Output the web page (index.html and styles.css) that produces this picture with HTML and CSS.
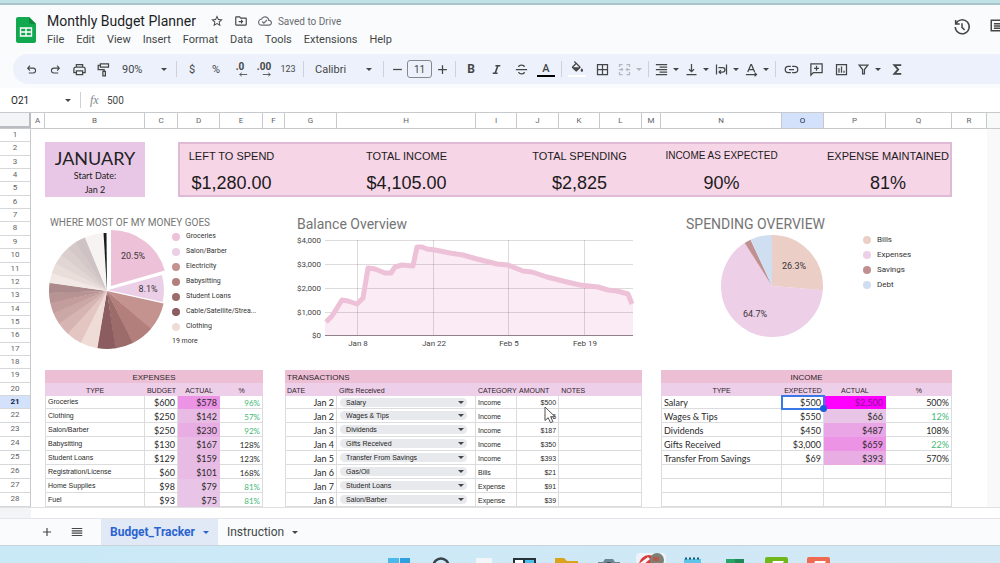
FILE: index.html
```html
<!DOCTYPE html>
<html lang="en">
<head>
    <meta charset="UTF-8">
    <meta name="viewport" content="width=device-width, initial-scale=1.0">
    <title>Monthly Budget Planner</title>
    <link rel="stylesheet" href="styles.css">
</head>
<body>
    <div class="window-edge"></div>

    <!-- Title and menus -->
    <header class="header">
        <svg class="logo" viewBox="0 0 20 26">
            <path fill="#12a84f" d="M2 0h11l7 7v17a2 2 0 0 1-2 2H2a2 2 0 0 1-2-2V2a2 2 0 0 1 2-2z"/>
            <path fill="#0b8a3e" d="M13 0l7 7h-5a2 2 0 0 1-2-2z"/>
            <path fill="none" stroke="#fff" stroke-width="1.4" d="M4.500 11h11v8h-11zM4.500 15h11M10 11v8"/>
        </svg>
        <div class="header-main">
            <div class="title-row">
                <h1>Monthly Budget Planner</h1>
                <button class="icon-btn" aria-label="Star"><svg viewBox="0 0 24 24"><path d="M22 9.24l-7.19-.62L12 2 9.19 8.63 2 9.24l5.46 4.73L5.82 21 12 17.27 18.18 21l-1.63-7.03L22 9.24zM12 15.4l-3.76 2.27 1-4.28-3.32-2.88 4.38-.38L12 6.1l1.71 4.04 4.38.38-3.32 2.88 1 4.28L12 15.4z"/></svg></button>
                <button class="icon-btn" aria-label="Move"><svg viewBox="0 0 24 24"><path d="M20 6h-8l-2-2H4c-1.1 0-2 .9-2 2v12c0 1.1.9 2 2 2h16c1.1 0 2-.9 2-2V8c0-1.1-.9-2-2-2zm0 12H4V6h5.17l2 2H20v10zm-8-1l4-4-4-4v3H8v2h4z"/></svg></button>
                <button class="icon-btn saved"><svg viewBox="0 0 24 24"><path d="M19.35 10.04C18.67 6.59 15.64 4 12 4 9.11 4 6.6 5.64 5.35 8.04 2.34 8.36 0 10.91 0 14c0 3.31 2.69 6 6 6h13c2.76 0 5-2.24 5-5 0-2.64-2.05-4.78-4.65-4.96zM19 18H6c-2.21 0-4-1.79-4-4 0-2.05 1.53-3.76 3.56-3.97l1.07-.11.5-.95C8.08 7.14 9.94 6 12 6c2.62 0 4.88 1.86 5.39 4.43l.3 1.5 1.53.11c1.56.1 2.78 1.41 2.78 2.96 0 1.65-1.35 3-3 3zm-9-3.82l-2.09-2.09L6.5 13.5 10 17l6.01-6.01-1.41-1.41z"/></svg>Saved to Drive</button>
            </div>
            <nav class="menus">
                <button>File</button>
                <button>Edit</button>
                <button>View</button>
                <button>Insert</button>
                <button>Format</button>
                <button>Data</button>
                <button>Tools</button>
                <button>Extensions</button>
                <button>Help</button>
            </nav>
        </div>
        <div class="header-actions">
            <button class="icon-btn big" aria-label="Version history"><svg class="line" viewBox="0 0 24 24"><path d="M4 7.500A9.300 9.300 0 1 1 3 12M3.500 2.500v5.500h5.500M12 7v5.500l3.500 3.500"/></svg></button>
            <button class="icon-btn big" aria-label="Comments"><svg class="line" viewBox="0 0 24 24"><path d="M3 3h18v17l-3-3H3zM6.500 7.500h11M6.500 10.500h11M6.500 13.500h11"/></svg></button>
        </div>
    </header>

    <!-- Toolbar -->
    <div class="toolbar-wrap">
        <div class="toolbar">
            <div class="group tight">
                <button class="tool undo" aria-label="Undo"><svg class="line" viewBox="0 0 24 24"><path d="M9 5L5 9.500l4 4.500M5.500 9.500H15a4.500 4.500 0 0 1 0 9H7"/></svg></button>
                <button class="tool undo" aria-label="Redo"><svg class="line" viewBox="0 0 24 24"><path d="M15 5l4 4.500-4 4.500M18.500 9.500H9a4.500 4.500 0 0 0 0 9h8"/></svg></button>
                <button class="tool" aria-label="Print"><svg class="line" viewBox="0 0 24 24"><path d="M7 8V4h10v4M7 17H3V11a3 3 0 0 1 3-3h12a3 3 0 0 1 3 3v6h-4M7 14h10v6H7z"/></svg></button>
                <button class="tool" aria-label="Paint format"><svg class="line" viewBox="0 0 24 24"><path d="M7 3h13v5H7zM7 5.500H3.500V12H13v3M11 15h4v7h-4z"/></svg></button>
            </div>
            <select class="zoom-pick" aria-label="Zoom"><option>90%</option><option>100%</option></select>
            <span class="sep"></span>
            <div class="group tight">
                <button class="tool">$</button>
                <button class="tool">%</button>
                <button class="tool dec" aria-label="Decrease decimal places">.0<svg class="line" viewBox="0 0 12 6"><path d="M11 3H2M4.500 1L2 3l2.500 2"/></svg></button>
                <button class="tool dec" aria-label="Increase decimal places">.00<svg class="line" viewBox="0 0 12 6"><path d="M1 3h9M7.500 1L10 3 7.500 5"/></svg></button>
                <button class="tool num">123</button>
            </div>
            <span class="sep"></span>
            <select class="font-pick" aria-label="Font"><option>Calibri</option><option>Arial</option></select>
            <span class="sep"></span>
            <div class="group tight">
                <button class="tool step" aria-label="Decrease font size"><svg class="line" viewBox="0 0 24 24"><path d="M5 12h14"/></svg></button>
                <input class="size-box" value="11" aria-label="Font size">
                <button class="tool step" aria-label="Increase font size"><svg class="line" viewBox="0 0 24 24"><path d="M5 12h14M12 5v14"/></svg></button>
            </div>
            <span class="sep"></span>
            <div class="group">
                <button class="tool bold">B</button>
                <button class="tool italic" aria-label="Italic"><svg class="line" viewBox="0 0 24 24"><path d="M10 5h9M5 19h9M14.500 5l-5 14"/></svg></button>
                <button class="tool" aria-label="Strikethrough"><svg class="line" viewBox="0 0 24 24"><path d="M3 12h18M16.500 8c-.5-4-9-4-9 0M7.500 16c.5 4 9 4 9 0"/></svg></button>
                <button class="tool text-color">A</button>
            </div>
            <span class="sep"></span>
            <div class="group">
                <button class="tool fill-color" aria-label="Fill color"><svg viewBox="0 0 24 24"><path d="M16.560 8.940L7.620 0 6.210 1.410l2.380 2.380-5.150 5.150a1.490 1.490 0 0 0 0 2.120l5.500 5.500c.29.29.68.44 1.060.44s.77-.15 1.060-.44l5.500-5.500c.59-.58.59-1.530 0-2.120zM5.210 10L10 5.210 14.790 10zM19 11.500s-2 2.170-2 3.500a2 2 0 0 0 4 0c0-1.330-2-3.500-2-3.500z"/></svg></button>
                <button class="tool" aria-label="Borders"><svg class="line" viewBox="0 0 24 24"><path d="M4 4h16v16H4zM12 4v16M4 12h16"/></svg></button>
                <button class="tool menu faded" aria-label="Merge cells"><svg class="line" viewBox="0 0 24 24"><path d="M9 4H4v4M15 4h5v4M9 20H4v-4M15 20h5v-4M3 12h6M7 10l2 2-2 2M21 12h-6M17 10l-2 2 2 2"/></svg><i class="caret"></i></button>
            </div>
            <span class="sep"></span>
            <div class="group tight">
                <button class="tool menu" aria-label="Horizontal align"><svg class="line" viewBox="0 0 24 24"><path d="M3 4h18M9 8h12M3 12h18M9 16h12M3 20h18"/></svg><i class="caret"></i></button>
                <button class="tool menu" aria-label="Vertical align"><svg class="line" viewBox="0 0 24 24"><path d="M4 20h16M12 3v12M8 11.500l4 4 4-4"/></svg><i class="caret"></i></button>
                <button class="tool menu" aria-label="Text wrapping"><svg class="line" viewBox="0 0 24 24"><path d="M4 4v16M20 4v16M7 9h7a3 3 0 0 1 0 7H9M11 13l-3 3 3 3"/></svg><i class="caret"></i></button>
                <button class="tool menu" aria-label="Text rotation"><svg class="line" viewBox="0 0 24 24"><path d="M6 16l5-12h1l5 12M8 12h7M3 20h17M17 17l3 3-3 3"/></svg><i class="caret"></i></button>
            </div>
            <span class="sep"></span>
            <div class="group">
                <button class="tool" aria-label="Insert link"><svg class="line" viewBox="0 0 24 24"><path d="M11 7H7a5 5 0 0 0 0 10h4M13 7h4a5 5 0 0 1 0 10h-4M8 12h8"/></svg></button>
                <button class="tool" aria-label="Insert comment"><svg class="line" viewBox="0 0 24 24"><path d="M3 21V3h18v14H7zM12 6v8M8 10h8"/></svg></button>
                <button class="tool" aria-label="Insert chart"><svg class="line" viewBox="0 0 24 24"><path d="M4 4h16v16H4zM8 10v7M12 7v10M16 14v3"/></svg></button>
                <button class="tool menu" aria-label="Filter"><svg class="line" viewBox="0 0 24 24"><path d="M5 5h14l-5.500 7v7h-3v-7z"/></svg><i class="caret"></i></button>
                <button class="tool" aria-label="Functions"><svg class="line heavy" viewBox="0 0 24 24"><path d="M18 5H7l6 7-6 7h11"/></svg></button>
            </div>
        </div>
    </div>

    <!-- Formula bar -->
    <div class="formula-bar">
        <input class="name-box" value="O21" aria-label="Name box">
        <i class="caret"></i>
        <span class="sep"></span>
        <label class="fx" for="formula">fx</label>
        <input id="formula" class="formula" value="500">
    </div>

    <!-- Sheet -->
    <div class="col-heads">
        <span class="corner"></span>
        <span>A</span><span>B</span><span>C</span><span>D</span><span>E</span><span>F</span><span>G</span><span>H</span><span>I</span><span>J</span><span>K</span><span>L</span><span>M</span><span>N</span><span class="active">O</span><span>P</span><span>Q</span><span>R</span><span class="outside"></span>
    </div>
    <main class="sheet">
        <div class="row-heads">
            <span>1</span><span>2</span><span>3</span><span>4</span><span>5</span><span>6</span><span>7</span><span>8</span><span>9</span><span>10</span><span>11</span><span>12</span><span>13</span><span>14</span><span>15</span><span>16</span><span>17</span><span>18</span><span>19</span><span>20</span><span class="active">21</span><span>22</span><span>23</span><span>24</span><span>25</span><span>26</span><span>27</span><span>28</span>
        </div>
        <div class="canvas">
            <div class="outside-area"></div>

            <section class="month">
                <h2>JANUARY</h2>
                <p>Start Date:</p>
                <p>Jan 2</p>
            </section>
            <section class="summary">
                <div class="stat left"><span class="label">LEFT TO SPEND</span><strong>$1,280.00</strong></div>
                <div class="stat income"><span class="label">TOTAL INCOME</span><strong>$4,105.00</strong></div>
                <div class="stat spending"><span class="label">TOTAL SPENDING</span><strong>$2,825</strong></div>
                <div class="stat expected"><span class="label small">INCOME AS EXPECTED</span><strong>90%</strong></div>
                <div class="stat maintained"><span class="label">EXPENSE MAINTAINED</span><strong>81%</strong></div>
            </section>

            <section class="chart money">
                <h3>WHERE MOST OF MY MONEY GOES</h3>
                <div class="chart-body">
                    <svg class="pie" viewBox="0 1 122 122">
                        <g class="slices" transform="translate(59 63) rotate(-90)">
                            <circle r="29" pathLength="360" stroke="#c4928f" stroke-dasharray="28.500 331.500" stroke-dashoffset="-102.500"/>
                            <circle r="29" pathLength="360" stroke="#b37f7c" stroke-dasharray="23.500 336.500" stroke-dashoffset="-130.500"/>
                            <circle r="29" pathLength="360" stroke="#9c6c6b" stroke-dasharray="18.500 341.500" stroke-dashoffset="-153.500"/>
                            <circle r="29" pathLength="360" stroke="#8b5d60" stroke-dasharray="18.500 341.500" stroke-dashoffset="-171.500"/>
                            <circle r="29" pathLength="360" stroke="#efdcd7" stroke-dasharray="18 342" stroke-dashoffset="-189.500"/>
                            <circle r="29" pathLength="360" stroke="#e3c5c2" stroke-dasharray="16 344" stroke-dashoffset="-207"/>
                            <circle r="29" pathLength="360" stroke="#d6b4b1" stroke-dasharray="14 346" stroke-dashoffset="-222.500"/>
                            <circle r="29" pathLength="360" stroke="#cba7a5" stroke-dasharray="12 348" stroke-dashoffset="-236"/>
                            <circle r="29" pathLength="360" stroke="#c29d9c" stroke-dasharray="11 349" stroke-dashoffset="-247.500"/>
                            <circle r="29" pathLength="360" stroke="#b89394" stroke-dasharray="10.500 349.500" stroke-dashoffset="-258"/>
                            <circle r="29" pathLength="360" stroke="#ac8a8c" stroke-dasharray="10.500 349.500" stroke-dashoffset="-268"/>
                            <circle r="29" pathLength="360" stroke="#f2e8e6" stroke-dasharray="10.500 349.500" stroke-dashoffset="-278"/>
                            <circle r="29" pathLength="360" stroke="#eadedb" stroke-dasharray="10.500 349.500" stroke-dashoffset="-288"/>
                            <circle r="29" pathLength="360" stroke="#e2d6d4" stroke-dasharray="10.500 349.500" stroke-dashoffset="-298"/>
                            <circle r="29" pathLength="360" stroke="#dbcfce" stroke-dasharray="10.500 349.500" stroke-dashoffset="-308"/>
                            <circle r="29" pathLength="360" stroke="#d5c8c9" stroke-dasharray="10.500 349.500" stroke-dashoffset="-318"/>
                            <circle r="29" pathLength="360" stroke="#cfc2c4" stroke-dasharray="10.500 349.500" stroke-dashoffset="-327.500"/>
                            <circle r="29" pathLength="360" stroke="#f6f3f2" stroke-dasharray="19 341" stroke-dashoffset="-337.500"/>
                            <circle r="29" pathLength="360" stroke="#1f1a1c" stroke-dasharray="3 357" stroke-dashoffset="-356.500"/>
                        </g>
                        <g class="slices popped" transform="translate(63 58) rotate(-90)">
                            <circle r="28" pathLength="360" stroke="#edc1d7" stroke-dasharray="73.800 286.200" stroke-dashoffset="0"/>
                        </g>
                        <g class="slices popped" transform="translate(60 62) rotate(-90)">
                            <circle r="28" pathLength="360" stroke="#ebcfe7" stroke-dasharray="28 332" stroke-dashoffset="-74.500"/>
                        </g>
                        <text x="85" y="31">20.5%</text>
                        <text x="100" y="64">8.1%</text>
                    </svg>
                    <ul class="legend">
                        <li><i class="dot groceries"></i>Groceries</li>
                        <li><i class="dot salon"></i>Salon/Barber</li>
                        <li><i class="dot electricity"></i>Electricity</li>
                        <li><i class="dot babysitting"></i>Babysitting</li>
                        <li><i class="dot loans"></i>Student Loans</li>
                        <li><i class="dot cable"></i>Cable/Satellite/Strea...</li>
                        <li><i class="dot clothing"></i>Clothing</li>
                        <li>19 more</li>
                    </ul>
                </div>
            </section>

            <section class="chart balance">
                <h3>Balance Overview</h3>
                <svg class="area" viewBox="0 0 357 120">
                    <path fill="#fbebf4" d="M40 90L45 85 57 68 63 69 72 72 78 66 83 36 90 37 100 41 106 41 110 35 117 33 128 34 132 15 137 15 142 17 150 18 165 21 178 23 192 27 212 32 223 33 238 39 247 40 262 45 282 50 295 53 313 55 323 58 332 59 343 62 348 71V104H40z"/>
                    <path class="grid-line" d="M40 8.500H348M40 32.500H348M40 56.500H348M40 80.500H348M72.500 8V104M148.500 8V104M223.500 8V104M299.500 8V104"/>
                    <path class="axis" d="M40 103.500H348"/>
                    <path class="balance-line" d="M41 90L47 84 57 68 63 69 72 72 78 66 83 36 90 37 100 41 106 41 110 35 117 33 128 34 132 15 137 15 142 17 150 18 165 21 178 23 192 27 212 32 223 33 238 39 247 40 262 45 282 50 295 53 313 55 323 58 332 59 343 62 347 72"/>
                    <g class="y-labels">
                        <text x="36" y="11">$4,000</text>
                        <text x="36" y="35">$3,000</text>
                        <text x="36" y="59">$2,000</text>
                        <text x="36" y="83">$1,000</text>
                        <text x="36" y="106">$0</text>
                    </g>
                    <g class="x-labels">
                        <text x="73" y="114">Jan 8</text>
                        <text x="149" y="114">Jan 22</text>
                        <text x="224" y="114">Feb 5</text>
                        <text x="300" y="114">Feb 19</text>
                    </g>
                </svg>
            </section>

            <section class="chart spending-chart">
                <h3>SPENDING OVERVIEW</h3>
                <div class="chart-body">
                    <svg class="pie" viewBox="0 0 104 104">
                        <g class="slices" transform="translate(52 52) rotate(-90)">
                            <circle r="25.500" pathLength="360" stroke="#ebcfc6" stroke-dasharray="95 265" stroke-dashoffset="0"/>
                            <circle r="25.500" pathLength="360" stroke="#edcfe7" stroke-dasharray="233.500 126.500" stroke-dashoffset="-94.700"/>
                            <circle r="25.500" pathLength="360" stroke="#c09090" stroke-dasharray="7.500 352.500" stroke-dashoffset="-327.600"/>
                            <circle r="25.500" pathLength="360" stroke="#cfdff1" stroke-dasharray="25 335" stroke-dashoffset="-335"/>
                        </g>
                        <text x="74" y="35">26.3%</text>
                        <text x="35" y="83">64.7%</text>
                    </svg>
                    <ul class="legend">
                        <li><i class="dot bills"></i>Bills</li>
                        <li><i class="dot expenses"></i>Expenses</li>
                        <li><i class="dot savings"></i>Savings</li>
                        <li><i class="dot debt"></i>Debt</li>
                    </ul>
                </div>
            </section>

            <table class="expense-table">
                <colgroup><col class="w-type"><col class="w-budget"><col class="w-actual"><col class="w-pct"></colgroup>
                <thead>
                    <tr class="caption-row"><th colspan="4">EXPENSES</th></tr>
                    <tr><th>TYPE</th><th>BUDGET</th><th>ACTUAL</th><th>%</th></tr>
                </thead>
                <tbody>
                    <tr><td>Groceries</td><td>$600</td><td class="heat-5">$578</td><td class="good">96%</td></tr>
                    <tr><td>Clothing</td><td>$250</td><td class="heat-2">$142</td><td class="good">57%</td></tr>
                    <tr><td>Salon/Barber</td><td>$250</td><td class="heat-3">$230</td><td class="good">92%</td></tr>
                    <tr><td>Babysitting</td><td>$130</td><td class="heat-2">$167</td><td>128%</td></tr>
                    <tr><td>Student Loans</td><td>$129</td><td class="heat-2">$159</td><td>123%</td></tr>
                    <tr><td>Registration/License</td><td>$60</td><td class="heat-2">$101</td><td>168%</td></tr>
                    <tr><td>Home Supplies</td><td>$98</td><td class="heat-1">$79</td><td class="good">81%</td></tr>
                    <tr><td>Fuel</td><td>$93</td><td class="heat-1">$75</td><td class="good">81%</td></tr>
                </tbody>
            </table>

            <table class="transaction-table">
                <colgroup><col class="w-date"><col class="w-item"><col class="w-cat"><col class="w-amount"><col class="w-notes"></colgroup>
                <thead>
                    <tr class="caption-row"><th colspan="5">TRANSACTIONS</th></tr>
                    <tr><th>DATE</th><th>Gifts Received</th><th>CATEGORY</th><th>AMOUNT</th><th>NOTES</th></tr>
                </thead>
                <tbody>
                    <tr><td>Jan 2</td><td><select aria-label="Item"><option>Salary</option></select></td><td>Income</td><td class="pointed">$500<svg class="cursor" viewBox="0 0 14 18"><path d="M1 1v13.500l3.200-2.800 2.300 5 2.400-1-2.300-5H11z"/></svg></td><td></td></tr>
                    <tr><td>Jan 2</td><td><select aria-label="Item"><option>Wages &amp; Tips</option></select></td><td>Income</td><td>$66</td><td></td></tr>
                    <tr><td>Jan 3</td><td><select aria-label="Item"><option>Dividends</option></select></td><td>Income</td><td>$187</td><td></td></tr>
                    <tr><td>Jan 4</td><td><select aria-label="Item"><option>Gifts Received</option></select></td><td>Income</td><td>$350</td><td></td></tr>
                    <tr><td>Jan 5</td><td><select aria-label="Item"><option>Transfer From Savings</option></select></td><td>Income</td><td>$393</td><td></td></tr>
                    <tr><td>Jan 6</td><td><select aria-label="Item"><option>Gas/Oil</option></select></td><td>Bills</td><td>$21</td><td></td></tr>
                    <tr><td>Jan 7</td><td><select aria-label="Item"><option>Student Loans</option></select></td><td>Expense</td><td>$91</td><td></td></tr>
                    <tr><td>Jan 8</td><td><select aria-label="Item"><option>Salon/Barber</option></select></td><td>Expense</td><td>$39</td><td></td></tr>
                </tbody>
            </table>

            <table class="income-table">
                <colgroup><col class="w-type"><col class="w-budget"><col class="w-actual"><col class="w-pct"></colgroup>
                <thead>
                    <tr class="caption-row"><th colspan="4">INCOME</th></tr>
                    <tr><th>TYPE</th><th>EXPECTED</th><th>ACTUAL</th><th>%</th></tr>
                </thead>
                <tbody>
                    <tr><td>Salary</td><td class="selected">$500</td><td class="heat-max">$2,500</td><td>500%</td></tr>
                    <tr><td>Wages &amp; Tips</td><td>$550</td><td class="heat-1">$66</td><td class="good">12%</td></tr>
                    <tr><td>Dividends</td><td>$450</td><td class="heat-4">$487</td><td>108%</td></tr>
                    <tr><td>Gifts Received</td><td>$3,000</td><td class="heat-5">$659</td><td class="good">22%</td></tr>
                    <tr><td>Transfer From Savings</td><td>$69</td><td class="heat-3">$393</td><td>570%</td></tr>
                    <tr><td></td><td></td><td></td><td></td></tr>
                    <tr><td></td><td></td><td></td><td></td></tr>
                    <tr><td></td><td></td><td></td><td></td></tr>
                </tbody>
            </table>
        </div>
    </main>
    <div class="scroll-gutter"></div>

    <!-- Sheet tabs -->
    <nav class="tabs">
        <button class="tab-icon" aria-label="Add sheet"><svg class="line" viewBox="0 0 24 24"><path d="M5 12h14M12 5v14"/></svg></button>
        <button class="tab-icon" aria-label="All sheets"><svg class="line" viewBox="0 0 24 24"><path d="M3 6h18M3 10h18M3 14h18M3 18h18"/></svg></button>
        <button class="tab current">Budget_Tracker<i class="caret"></i></button>
        <button class="tab">Instruction<i class="caret"></i></button>
    </nav>

    <!-- Taskbar -->
    <footer class="taskbar">
        <button aria-label="Start"><svg viewBox="0 0 30 24"><path fill="#4db8ea" d="M4 5h11v11H4z"/><path fill="#2f9fe0" d="M16 5h10v11H16z"/></svg></button>
        <button aria-label="Search"><svg viewBox="0 0 30 24"><circle cx="15" cy="13" r="7.500" fill="none" stroke="#39434b" stroke-width="2.500"/></svg></button>
        <button aria-label="Chat"><svg viewBox="0 0 30 24"><rect x="8" y="5" width="16" height="16" rx="1" fill="#f3f6f8"/></svg></button>
        <button aria-label="Task view"><svg viewBox="0 0 30 24"><path fill="#26323a" d="M3 5h23v18H3z"/><path fill="#fff" d="M5 7h8v14H5z"/><path fill="#4fc0ee" d="M15 7h9v14h-9z"/></svg></button>
        <button aria-label="Files"><svg viewBox="0 0 30 24"><path fill="#d9a31c" d="M3 5h9l3 3h11v13H3z"/><path fill="#f5c64a" d="M3 10h23v11H3z"/></svg></button>
        <button aria-label="Camera"><svg viewBox="0 0 30 24"><path fill="#6f8794" d="M4 9h5l2-3h8l2 3h5v12H4z"/><circle cx="15" cy="14" r="5" fill="#37474f"/></svg></button>
        <button class="running" aria-label="Browser"><svg viewBox="0 0 30 24"><circle cx="13" cy="12" r="10" fill="#d93a39"/><path fill="#f7f7f7" d="M4 10l8-6 2 2-8 7z"/><circle cx="21" cy="7" r="7" fill="#7d8175"/><path fill="#b8584a" d="M17 4h6v4h-6z"/></svg></button>
        <button aria-label="Notepad"><svg viewBox="0 0 30 24"><rect x="6" y="6" width="17" height="16" fill="#5fc4ea"/><path stroke="#17566f" stroke-width="2" stroke-dasharray="2 2" d="M7 5.500h16"/></svg></button>
        <button aria-label="Sheets"><svg viewBox="0 0 30 24"><path fill="#27a567" d="M6 6h9v14H6z"/><path fill="#1f8a56" d="M15 6h9v14h-9z"/></svg></button>
        <button aria-label="Camtasia"><svg viewBox="0 0 30 24"><rect x="3" y="4" width="23" height="19" rx="2" fill="#6fb71b"/><path fill="#fff" d="M11 8h11l-4 8H8z"/></svg></button>
        <button aria-label="Recorder"><svg viewBox="0 0 30 24"><rect x="3" y="4" width="23" height="19" rx="2" fill="#ee6a50"/><path fill="#fff" d="M11 8h11l-4 8H8z"/></svg></button>
    </footer>
</body>
</html>
```
FILE: styles.css
```css
:root {
    --cols: 14fr 100fr 33fr 42fr 43fr 22fr 52fr 139fr 41fr 42fr 41fr 42fr 19fr 121fr 42fr 62fr 66fr 35fr 13fr;
    --line: #dcdcde;
    --ink: #444746;
    --arial: "Liberation Sans", Arial, sans-serif;
    --calibri: Lato, Calibri, sans-serif;
}

* {
    box-sizing: border-box;
}

body {
    margin: 0;
    height: 100vh;
    overflow: hidden;
    display: flex;
    flex-direction: column;
    font-family: Roboto, sans-serif;
    color: var(--ink);
    background-color: #f9fbfd;
}

h1, h2, h3, p, ul {
    margin: 0;
    padding: 0;
    font-weight: normal;
}

button, input, select {
    margin: 0;
    padding: 0;
    border: none;
    background: none;
    color: inherit;
    font-family: inherit;
    font-size: inherit;
}

svg {
    display: block;
    fill: currentColor;
}

.line {
    fill: none;
    stroke: currentColor;
    stroke-width: 2;
}

.heavy {
    stroke-width: 3;
}

.caret {
    border: 3px solid transparent;
    border-top-color: currentColor;
    border-bottom: none;
}

.window-edge {
    height: 5px;
    flex: none;
    background-color: #bfe2e6;
    border-bottom: 2px solid #a9c5cb;
}

/* Header */
.header {
    display: flex;
    height: 49px;
    flex: none;
    padding: 6px 0 0 16px;
}

.logo {
    width: 20px;
    height: 26px;
    margin-top: 6px;
}

.header-main {
    flex: 1;
    padding-left: 11px;
}

.title-row {
    display: flex;
    align-items: center;
    height: 20px;
}

h1 {
    font-size: 14px;
    color: #1f1f1f;
    margin-right: 9px;
}

.icon-btn {
    display: flex;
    align-items: center;
    gap: 6px;
    padding: 0 5px;
}

.icon-btn svg {
    width: 14px;
    height: 14px;
}

.icon-btn.big svg {
    width: 18px;
    height: 18px;
}

.saved {
    font-size: 10px;
    color: #6a6d70;
}

.menus {
    display: flex;
    gap: 12px;
    padding-top: 2px;
    font-size: 11px;
}

.header-actions {
    display: flex;
    align-items: flex-start;
    gap: 8px;
    margin-right: -12px;
    padding-top: 7px;
}

/* Toolbar */
.toolbar-wrap {
    flex: none;
    padding: 0 0 4px 13px;
}

.toolbar {
    display: flex;
    align-items: center;
    height: 30px;
    padding-left: 6px;
    border-radius: 15px 0 0 15px;
    background-color: #edf1fb;
    font-size: 11px;
}

.group {
    display: flex;
    align-items: center;
    gap: 1px;
}

.group.tight {
    gap: 0;
}

.tool {
    display: flex;
    align-items: center;
    justify-content: center;
    width: 24px;
    height: 22px;
}

.tool svg {
    width: 15px;
    height: 15px;
}

.tool.undo svg {
    width: 13px;
    height: 13px;
}

.tool.step {
    width: 20px;
}

.tool.menu {
    width: 30px;
    justify-content: flex-start;
    gap: 4px;
    padding-left: 2px;
}

.tool.num {
    font-size: 9px;
}

.tool.dec {
    flex-direction: column;
    font-weight: bold;
    font-size: 10px;
    line-height: 10px;
}

.tool.dec svg {
    width: 10px;
    height: 5px;
    margin-left: 5px;
    stroke-width: 1;
}

.bold {
    font-weight: bold;
    font-size: 12px;
}

.italic svg {
    stroke-width: 3;
    width: 13px;
    height: 13px;
}

.text-color, .fill-color {
    height: 15px;
    border-bottom: 2px solid #000;
    width: 18px;
    margin: 0 3px;
    font-weight: 500;
}

.fill-color {
    border-bottom-color: #fff;
}

.faded {
    color: #b4b7bd;
}

.sep {
    width: 1px;
    height: 16px;
    margin: 0 3px;
    background-color: #cdd1da;
}

.zoom-pick, .font-pick, .transaction-table select {
    appearance: none;
    background: url("data:image/svg+xml,%3Csvg xmlns='http://www.w3.org/2000/svg' width='6' height='3'%3E%3Cpath fill='%23444746' d='M0 0h6L3 3z'/%3E%3C/svg%3E") no-repeat right 6px center;
}

.zoom-pick {
    width: 58px;
    height: 20px;
    padding-left: 7px;
}

.font-pick {
    width: 73px;
    height: 20px;
    padding-left: 8px;
    background-position: right 8px center;
}

.size-box {
    width: 25px;
    height: 18px;
    border: 1px solid #85888d;
    border-radius: 3px;
    text-align: center;
    font-size: 10px;
}

/* Formula bar */
.formula-bar {
    display: flex;
    align-items: center;
    height: 24px;
    flex: none;
    background-color: #fff;
    font-size: 10px;
    padding-left: 11px;
}

.name-box {
    width: 54px;
    color: #222;
}

.formula-bar .sep {
    margin: 0 9px;
}

.fx {
    font: italic 12px "Liberation Serif", serif;
    color: #80868b;
    width: 17px;
}

.formula {
    flex: 1;
}

/* Sheet */
.col-heads {
    display: grid;
    grid-template-columns: 31px var(--cols);
    height: 17px;
    flex: none;
    border-top: 1px solid #c7c9cc;
    border-bottom: 1px solid #c7c9cc;
    background-color: #fff;
    font-size: 8px;
    line-height: 15px;
    text-align: center;
    color: #5f6368;
}

.col-heads span {
    min-width: 0;
    border-right: 1px solid #c7c9cc;
}

.col-heads .corner {
    background-color: #f3f4f5;
    border-right: 2px solid #b9bcc0;
    border-bottom: 2px solid #b9bcc0;
}

.col-heads .active, .row-heads .active {
    background-color: #d3e1fb;
    color: #10254d;
}

.col-heads .outside {
    background-color: #f8faf9;
    border: none;
}

.sheet {
    display: grid;
    grid-template-columns: 31px 1fr;
    flex: none;
    background-color: #fff;
    border-bottom: 1px solid #dfe1e3;
}

.row-heads {
    display: grid;
    grid-template-rows: repeat(20, 1fr) 13px repeat(7, 14px);
    border-right: 1px solid #c7c9cc;
    font-size: 8px;
    line-height: 12px;
    text-align: center;
    color: #5f6368;
}

.row-heads span {
    border-bottom: 1px solid #d5d7d9;
    min-height: 0;
}

.row-heads .active {
    font-weight: bold;
}

.canvas {
    display: grid;
    grid-template-columns: var(--cols);
    grid-template-rows: 13px 55px 173px auto;
}

.canvas > * {
    min-width: 0;
}

.outside-area {
    grid-column: 19;
    grid-row: 1 / 5;
    background-color: #f8faf9;
}

.month {
    grid-column: 2;
    grid-row: 2;
    padding-top: 5px;
    background-color: #e8c7e6;
    font-family: var(--calibri);
    font-size: 9px;
    line-height: 14px;
    text-align: center;
    color: #222;
}

.month h2 {
    font-size: 18px;
    line-height: 22px;
}

.summary {
    grid-column: 4 / 18;
    grid-row: 2;
    display: grid;
    grid-template-columns: subgrid;
    padding-top: 7px;
    background-color: #f5d5e6;
    box-shadow: inset 0 0 0 2px #dfb9d6;
    font-family: var(--arial);
    color: #1d1a1c;
}

.stat {
    display: flex;
    flex-direction: column;
    align-items: center;
    gap: 8px;
    white-space: nowrap;
}

.stat .label {
    font-size: 11px;
    line-height: 14px;
}

.stat .small {
    font-size: 10px;
}

.stat strong {
    font-size: 18px;
    line-height: 24px;
    font-weight: normal;
}

.left { grid-column: 1 / 4; }
.income { grid-column: 5; }
.spending { grid-column: 7 / 10; }
.expected { grid-column: 11; }
.maintained { grid-column: 13 / 15; }

/* Charts */
.chart {
    grid-row: 3;
    padding-top: 19px;
}

.chart h3 {
    font-size: 14px;
    line-height: 16px;
    color: #757575;
    white-space: nowrap;
}

.chart-body {
    display: flex;
}

.slices circle {
    fill: none;
    stroke-width: 58px;
}

.slices.popped circle {
    stroke-width: 56px;
}

.pie {
    flex: none;
}

.pie text {
    font-size: 9px;
    fill: #3c3438;
    text-anchor: middle;
}

.legend {
    list-style: none;
    font-size: 7px;
    line-height: 15px;
    color: #333;
    white-space: nowrap;
}

.legend li {
    display: flex;
    align-items: center;
    gap: 6px;
}

.dot {
    width: 8px;
    height: 8px;
    border-radius: 50%;
}

.money {
    grid-column: 2 / 7;
    padding: 20px 0 0 3px;
}

.money h3 {
    font-size: 10px;
    line-height: 12px;
    padding-left: 2px;
}

.money .pie {
    width: 122px;
    height: 122px;
}

.money .legend {
    padding-left: 2px;
}

.groceries { background-color: #edc1d7; }
.salon { background-color: #ebcfe7; }
.electricity { background-color: #c4928f; }
.babysitting { background-color: #b37f7c; }
.loans { background-color: #9c6c6b; }
.cable { background-color: #8b5d60; }
.clothing { background-color: #efdcd7; }
.bills { background-color: #ebcfc6; }
.expenses { background-color: #edcfe7; }
.savings { background-color: #c09090; }
.debt { background-color: #cfdff1; }

.balance {
    grid-column: 7 / 13;
}

.balance h3 {
    padding-left: 12px;
}

.area {
    width: 100%;
}

.area text {
    font-size: 8px;
    fill: #444;
}

.y-labels {
    text-anchor: end;
}

.x-labels {
    text-anchor: middle;
}

.grid-line {
    fill: none;
    stroke: rgba(90, 70, 80, 0.2);
}

.axis {
    stroke: #8c8188;
}

.balance-line {
    fill: none;
    stroke: #edc1d7;
    stroke-width: 5;
    stroke-linejoin: round;
}

.spending-chart {
    grid-column: 14 / 18;
}

.spending-chart h3 {
    padding-left: 25px;
}

.spending-chart .chart-body {
    padding-left: 59px;
    gap: 39px;
}

.spending-chart .pie {
    width: 104px;
    height: 104px;
    margin-top: 2px;
}

.spending-chart .slices circle {
    stroke-width: 51px;
}

.spending-chart .legend {
    font-size: 8px;
}

/* Tables */
table {
    grid-row: 4;
    width: 100%;
    table-layout: fixed;
    border-collapse: separate;
    border-spacing: 0;
    font-family: var(--calibri);
    font-size: 9px;
    line-height: 10px;
    color: #2a2a2a;
}

.expense-table { grid-column: 2 / 6; }
.transaction-table { grid-column: 7 / 13; }
.income-table { grid-column: 14 / 18; }

.expense-table .w-type { width: 45.9%; }
.expense-table .w-budget { width: 15.1%; }
.expense-table .w-actual { width: 19.3%; }
.income-table .w-type { width: 41.6%; }
.income-table .w-budget { width: 14.4%; }
.income-table .w-actual { width: 21.3%; }
.w-date { width: 14.6%; }
.w-item { width: 38.9%; }
.w-cat { width: 11.5%; }
.w-amount { width: 11.8%; }

th {
    height: 13px;
    padding: 3px 0 0;
    background-color: #eecfe9;
    font-family: var(--arial);
    font-size: 7px;
    font-weight: normal;
    color: #2e1f2a;
    white-space: nowrap;
}

.caption-row th {
    padding-top: 2px;
    background-color: #edbfd5;
    font-size: 8px;
}

td {
    height: 14px;
    padding: 2px 2px 0;
    border-right: 1px solid var(--line);
    border-bottom: 1px solid var(--line);
    text-align: right;
    white-space: nowrap;
}

tbody tr:first-child td {
    height: 13px;
}

td:first-child {
    border-left: 1px solid var(--line);
}

.expense-table td:first-child, .income-table td:first-child {
    text-align: left;
}

.expense-table td:first-child {
    padding-top: 0;
    font-family: var(--arial);
    font-size: 7px;
}

.expense-table td:last-child {
    font-size: 8px;
}

.good, .expense-table .good {
    color: #45b876;
}

.heat-1, .heat-2, .heat-3, .heat-4, .heat-5, .heat-max {
    border-color: transparent;
}

.heat-1 { background-color: #e8c4e6; }
.heat-2 { background-color: #e8bbe5; }
.heat-3 { background-color: #e8aee4; }
.heat-4 { background-color: #e9a5e6; }
.heat-5 { background-color: #ec93e6; }
.heat-max { background-color: #ff00ff; color: #8a1590; }

.transaction-table th {
    text-align: left;
    padding-left: 2px;
}

.transaction-table td:nth-child(3), .transaction-table td:nth-child(4) {
    font-family: var(--arial);
    font-size: 7px;
}

.transaction-table td:nth-child(3) {
    text-align: left;
}

.transaction-table td:nth-child(2) {
    padding: 0 8px 0 3px;
}

.transaction-table select {
    display: block;
    width: 100%;
    height: 9px;
    padding-left: 6px;
    border-radius: 5px;
    background-color: #e8e9ed;
    background-position: right 3px center;
    font-family: var(--arial);
    font-size: 7px;
    line-height: 9px;
    color: #222;
}

.selected {
    position: relative;
    outline: 2px solid #3b78e7;
    outline-offset: -1px;
}

.selected::after {
    content: "";
    position: absolute;
    right: -4px;
    bottom: -4px;
    width: 7px;
    height: 7px;
    border-radius: 50%;
    background-color: #1a5fd8;
}

.pointed {
    position: relative;
}

.cursor {
    position: absolute;
    left: 27px;
    top: 10px;
    width: 14px;
    height: 18px;
    fill: #fff;
    stroke: #555;
}

.scroll-gutter {
    height: 10px;
    flex: none;
    background: linear-gradient(90deg, #f3f4f5 31px, #fff 31px);
}

/* Tabs */
.tabs {
    display: flex;
    height: 28px;
    flex: none;
    padding-left: 32px;
    border-top: 1px solid #e4e6e9;
    border-bottom: 1px solid #c9d3da;
}

.tab-icon {
    display: flex;
    align-items: center;
    justify-content: center;
    width: 30px;
}

.tab-icon svg {
    width: 14px;
    height: 14px;
}

.tab-icon + .tab {
    margin-left: 9px;
}

.tab {
    display: flex;
    align-items: center;
    gap: 8px;
    padding: 0 9px;
    font-size: 12px;
}

.tab.current {
    background-color: #e1e9f7;
    color: #2a63cf;
    font-weight: bold;
}

/* Taskbar */
.taskbar {
    display: flex;
    flex: 1;
    min-height: 0;
    gap: 12px;
    padding: 7px 0 0 384px;
    background: linear-gradient(90deg, #c9e9f7, #d3e8f5);
    overflow: hidden;
}

.taskbar button {
    width: 30px;
    height: 24px;
    flex: none;
}

.taskbar svg {
    width: 30px;
    height: 24px;
}

.running {
    background-color: #eef3f9;
    border-radius: 4px;
}
```
